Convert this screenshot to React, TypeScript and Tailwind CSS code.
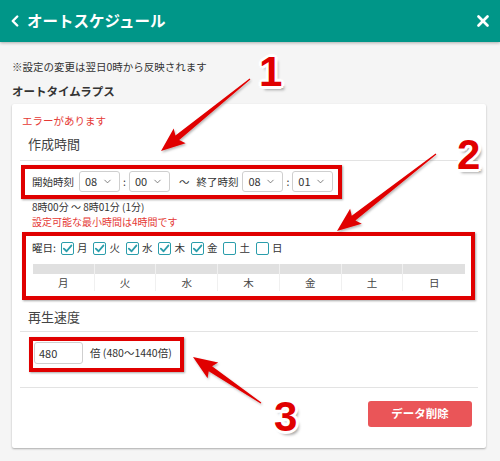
import { ChevronLeft, ChevronDown, X } from "lucide-react"

const FONT = { fontFamily: '"Noto Sans CJK JP", "Noto Sans", sans-serif' }

const DAYS = ["月", "火", "水", "木", "金", "土", "日"]
const CHECKED = [true, true, true, true, true, false, false]

function TimeSelect({ value }: { value: string }) {
  return (
    <div className="w-[41px] h-[21px] border border-[#cfcfcf] rounded-[3px] bg-white flex items-center justify-between pl-[5px] pr-[6px] text-[11px] text-[#333]">
      <span>{value}</span>
      <ChevronDown size={11} strokeWidth={1.6} className="text-[#555]" />
    </div>
  )
}

function Check({ on }: { on: boolean }) {
  return (
    <div className="w-[13px] h-[13px] border-[1.5px] border-[#2a9dab] rounded-[2px] bg-white flex items-center justify-center">
      {on && (
        <svg width="11" height="11" viewBox="0 0 12 12">
          <path d="M2 6.2 L5 9 L10.2 2.8" fill="none" stroke="#2a9dab" strokeWidth="2" strokeLinecap="round" strokeLinejoin="round" />
        </svg>
      )}
    </div>
  )
}

// tapered annotation arrow from tail to tip
function arrowPoints(tx: number, ty: number, px: number, py: number) {
  const dx = px - tx
  const dy = py - ty
  const len = Math.hypot(dx, dy)
  const ux = dx / len
  const uy = dy / len
  const nx = -uy
  const ny = ux
  const L = 21
  const bx = px - ux * L
  const by = py - uy * L
  const w0 = 0.6
  const w1 = 3
  const H = 9.5
  const pts = [
    [tx + nx * w0, ty + ny * w0],
    [bx + nx * w1, by + ny * w1],
    [bx + nx * H - ux * 3, by + ny * H - uy * 3],
    [px, py],
    [bx - nx * H - ux * 3, by - ny * H - uy * 3],
    [bx - nx * w1, by - ny * w1],
    [tx - nx * w0, ty - ny * w0],
  ]
  return pts.map((p) => p.join(",")).join(" ")
}

const NUM_SHADOW =
  "[text-shadow:3px_0_0_#fff,-3px_0_0_#fff,0_3px_0_#fff,0_-3px_0_#fff,2px_2px_0_#fff,-2px_-2px_0_#fff,2px_-2px_0_#fff,-2px_2px_0_#fff,3px_4px_3px_rgba(0,0,0,0.35)]"

export default function App() {
  return (
    <div className="relative w-[500px] h-[461px] overflow-hidden bg-[#f5f5f5] text-[#333]" style={FONT}>
      {/* Header */}
      <div className="h-[42px] bg-[#009688] flex items-center justify-between pl-[6px] pr-[8px] text-white shadow-[0_1px_3px_rgba(0,0,0,0.3)]">
        <div className="flex items-center gap-[3px]">
          <ChevronLeft size={18} strokeWidth={3.2} />
          <span className="text-[15.5px] font-bold">オートスケジュール</span>
        </div>
        <X size={18} strokeWidth={3.6} />
      </div>

      <div className="px-[12px]">
        <p className="mt-[18px] text-[10.5px] leading-[14px]">※設定の変更は翌日0時から反映されます</p>
        <p className="mt-[10px] text-[11.5px] leading-[14px] font-bold">オートタイムラプス</p>

        {/* Card */}
        <div className="mt-[6px] w-[474px] h-[344px] bg-white rounded-[2px] shadow-[0_1px_2px_rgba(0,0,0,0.3)] px-[8px] pt-[9px]">
          <p className="pl-[2px] text-[10.5px] leading-[16px] text-[#e53935]">エラーがあります</p>

          <div className="mt-[5px] border-b border-[#e3e3e3] pl-[8px] pb-[6px] text-[13px] leading-[20px] text-[#444]">作成時間</div>

          <div className="pl-[12px] text-[10.5px]">
            <div className="mt-[10px] flex items-center h-[21px]">
              <span>開始時刻</span>
              <div className="ml-[5px]"><TimeSelect value="08" /></div>
              <span className="mx-[3px]">:</span>
              <TimeSelect value="00" />
              <span className="ml-[9px]">〜</span>
              <span className="ml-[7px]">終了時刻</span>
              <div className="ml-[4px]"><TimeSelect value="08" /></div>
              <span className="mx-[3px]">:</span>
              <TimeSelect value="01" />
            </div>
            <p className="mt-[8px] text-[10px] leading-[14.5px]">8時00分 〜 8時01分 (1分)</p>
            <p className="text-[10px] leading-[14.5px] text-[#e53935]">設定可能な最小時間は4時間です</p>

            <div className="mt-[12px] flex items-center h-[14px]">
              <span className="mr-[5px]">曜日:</span>
              {DAYS.map((d, i) => (
                <div key={d} className="flex items-center mr-[6px]">
                  <Check on={CHECKED[i]} />
                  <span className="ml-[3px]">{d}</span>
                </div>
              ))}
            </div>

            <div className="mt-[9px] ml-[1px] w-[432px] grid grid-cols-7">
              {DAYS.map((d, i) => (
                <div key={d} className={i < 6 ? "border-r border-[#f0f0f0]" : ""}>
                  <div className="h-[10px] bg-[#e0e0e0]" />
                  <div className="h-[17px] flex items-center justify-center text-[10.5px] text-[#444]">{d}</div>
                </div>
              ))}
            </div>
          </div>

          <div className="mt-[16px] border-b border-[#e3e3e3] pl-[8px] pb-[4px] text-[13px] leading-[20px] text-[#444]">再生速度</div>

          <div className="border-b border-[#e3e3e3] pt-[10px] pb-[23px] pl-[14px] flex items-center text-[10.5px]">
            <div className="w-[49px] h-[22px] border border-[#cfcfcf] rounded-[3px] flex items-center pl-[4px] text-[11px]">480</div>
            <span className="ml-[7px]">倍 (480〜1440倍)</span>
          </div>

          <div className="flex justify-end pr-[6px] mt-[13px]">
            <button className="w-[104px] h-[26px] rounded-[3px] bg-[#ea5558] text-white text-[11.5px] font-bold">データ削除</button>
          </div>
        </div>
      </div>

      {/* Annotation boxes */}
      <div className="absolute left-[21px] top-[165px] w-[321px] h-[34px] border-[4px] border-[#e00000] shadow-[1px_1px_2px_rgba(0,0,0,0.35)] pointer-events-none" />
      <div className="absolute left-[22px] top-[232px] w-[453px] h-[68px] border-[4px] border-[#e00000] shadow-[1px_1px_2px_rgba(0,0,0,0.35)] pointer-events-none" />
      <div className="absolute left-[29px] top-[337px] w-[155px] h-[35px] border-[4px] border-[#e00000] shadow-[1px_1px_2px_rgba(0,0,0,0.35)] pointer-events-none" />

      {/* Annotation arrows */}
      <svg className="absolute left-0 top-0 pointer-events-none" width="500" height="461" viewBox="0 0 500 461">
        <defs>
          <filter id="sh" x="-20%" y="-20%" width="140%" height="140%">
            <feDropShadow dx="1" dy="1.5" stdDeviation="1" floodColor="#000" floodOpacity="0.3" />
          </filter>
        </defs>
        <g fill="#e00000" filter="url(#sh)">
          <polygon points={arrowPoints(250, 79, 161, 151)} />
          <polygon points={arrowPoints(436, 154, 337, 231)} />
          <polygon points={arrowPoints(261, 403, 193, 357)} />
        </g>
      </svg>

      {/* Annotation numbers */}
      <span className={`absolute left-[259px] top-[48px] text-[42px] leading-[48px] font-bold text-[#e00000] ${NUM_SHADOW}`} style={{ fontFamily: '"Liberation Sans", Arial, sans-serif' }}>1</span>
      <span className={`absolute left-[457px] top-[131px] text-[42px] leading-[48px] font-bold text-[#e00000] ${NUM_SHADOW}`} style={{ fontFamily: '"Liberation Sans", Arial, sans-serif' }}>2</span>
      <span className={`absolute left-[274px] top-[393px] text-[42px] leading-[48px] font-bold text-[#e00000] ${NUM_SHADOW}`} style={{ fontFamily: '"Liberation Sans", Arial, sans-serif' }}>3</span>
    </div>
  )
}
